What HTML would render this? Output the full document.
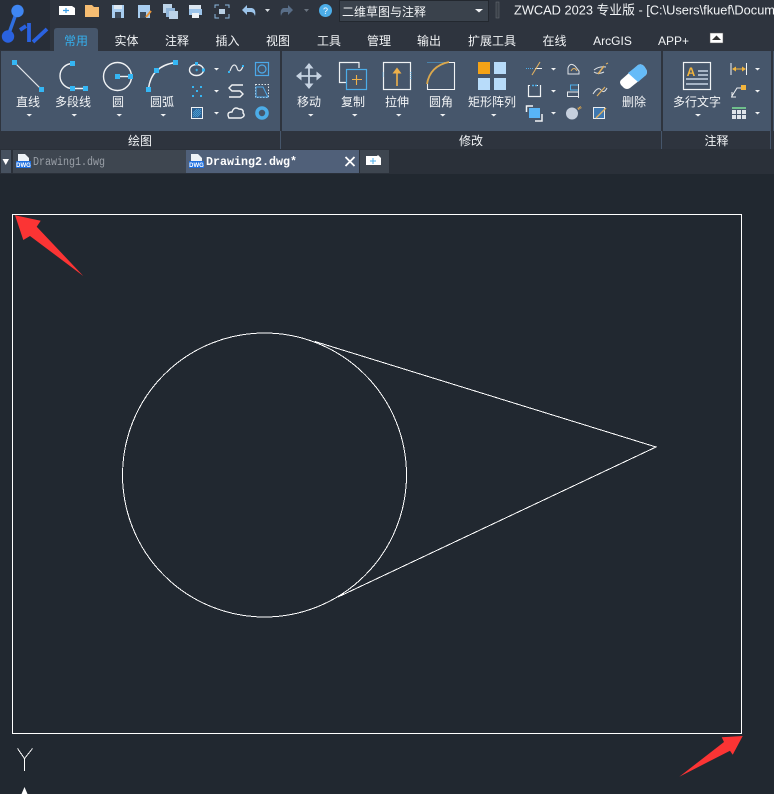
<!DOCTYPE html>
<html><head><meta charset="utf-8"><style>
html,body{margin:0;padding:0;background:#212830;width:774px;height:794px;overflow:hidden}
svg{display:block}
text{font-family:"Liberation Sans","Noto Sans CJK SC",sans-serif;font-size:12px;fill:#f2f4f6}
.c{text-anchor:middle}
.b{fill:#35b6f4}
.w{fill:none;stroke:#f0f2f4;stroke-width:1.4}
.l{fill:none;stroke:#e4e8ec;stroke-width:1.2}
.a{fill:#f0f2f4}
</style></head><body>
<svg xmlns="http://www.w3.org/2000/svg" width="774" height="794" viewBox="0 0 774 794">
<rect width="774" height="794" fill="#212830"/>
<rect width="774" height="149" fill="#2e343e"/>
<rect width="50" height="50" fill="#282e38"/>
<!-- logo -->
<path d="M17 11L8 36" stroke="#2f6fe0" stroke-width="3.400" fill="none"/>
<circle cx="17.500" cy="11" r="6.200" fill="#3f86f2"/><circle cx="8" cy="36.500" r="6.200" fill="#2a62e0"/>
<path d="M20 30L26 26M29 23V42M33 42L47 29" stroke="#2a62e0" stroke-width="3.800" fill="none"/>
<!-- quick access -->
<path d="M59 6H72L75 8V15H59Z" fill="#fff"/><path d="M63 10.500H69M66 8V13" stroke="#3a9ee8" stroke-width="1.200"/>
<path d="M85 5H92L94 7H99V17H85Z" fill="#f6bd72"/>
<rect x="112" y="5" width="12" height="13" fill="#a8cdf0"/><rect x="114" y="5" width="8" height="4" fill="#dfe9f2"/><rect x="115" y="12" width="6" height="6" fill="#3d4a5a"/>
<rect x="138" y="5" width="12" height="13" fill="#a8cdf0"/><rect x="140" y="12" width="6" height="6" fill="#3d4a5a"/><path d="M146 17L151 11" stroke="#e8953a" stroke-width="2"/>
<rect x="163" y="4" width="9" height="9" fill="#bcd3e8"/><rect x="166" y="8" width="9" height="9" fill="#8fb4d8"/><rect x="169" y="11" width="9" height="8" fill="#bcd3e8"/>
<rect x="189" y="5" width="12" height="5" fill="#dce6f0"/><rect x="189" y="9" width="13" height="6" fill="#9cc4ea"/><rect x="192" y="13" width="7" height="5" fill="#eef2f6"/>
<path d="M215 8V5H219M225 5H229V8M229 14V18H225M219 18H215V14" fill="none" stroke="#8cb8de" stroke-width="1"/><rect x="219" y="9" width="6" height="5" fill="#b8cfe4"/>
<path d="M242 10L247 5V8H251C255 8 256 12 255 16C254 13 253 12 250 12H247V15Z" fill="#9cc4ea"/>
<path d="M265 9H270L267.500 12Z" fill="#d8dde2"/>
<path d="M293 10L288 5V8H284C281 8 280 12 281 16C282 13 283 12 285 12H288V15Z" fill="#596e88"/>
<path d="M304 9H309L306.500 12Z" fill="#6a7480"/>
<circle cx="325.500" cy="10.500" r="6.500" fill="#4cade8"/><text x="325.500" y="14" class="c" style="font-size:9px;fill:#fff">?</text>
<rect x="339.500" y="0.500" width="149" height="21" fill="#3a424c" stroke="#23282f"/>
<text x="342" y="16">二维草图与注释</text>
<path d="M475 9H483L479 12.500Z" fill="#f0f2f4"/>
<rect x="496" y="2" width="3" height="16" fill="#3a4048" stroke="#6a7078" stroke-width="0.500"/>
<text x="514" y="14.500" style="font-size:12.800px">ZWCAD 2023 专业版 - [C:\Users\fkuef\Docum</text>
<!-- tabs -->
<path d="M54 51V31Q54 28 57 28H95Q98 28 98 31V51Z" fill="#46566b"/>
<text x="76" y="45" class="c" style="fill:#35b0ee">常用</text>
<text x="126.500" y="45" class="c">实体</text><text x="177" y="45" class="c">注释</text><text x="227.500" y="45" class="c">插入</text>
<text x="278" y="45" class="c">视图</text><text x="329" y="45" class="c">工具</text><text x="379" y="45" class="c">管理</text><text x="429" y="45" class="c">输出</text>
<text x="492" y="45" class="c">扩展工具</text><text x="554.500" y="45" class="c">在线</text><text x="612.500" y="45" class="c">ArcGIS</text><text x="673.500" y="45" class="c">APP+</text>
<rect x="710" y="33" width="13" height="10" fill="#fff" stroke="#555" stroke-width="0.500"/><path d="M712 40H721L716.500 35.500Z" fill="#333"/>
<!-- ribbon panels -->
<rect x="1" y="51" width="279" height="80" fill="#46566b"/>
<rect x="282" y="51" width="379" height="80" fill="#46566b"/>
<rect x="663" y="51" width="108" height="80" fill="#46566b"/>
<rect x="773" y="51" width="1" height="80" fill="#46566b"/>
<rect x="280" y="131" width="1" height="18" fill="#46566b"/><rect x="661" y="131" width="1" height="18" fill="#46566b"/><rect x="770" y="131" width="1" height="18" fill="#46566b"/>
<text x="140" y="145" class="c">绘图</text><text x="471" y="145" class="c">修改</text><text x="716.500" y="145" class="c">注释</text>
<!-- draw icons -->
<path d="M14.500 62.500L41.500 89.500" class="l"/>
<rect x="12" y="60" width="5" height="5" class="b"/><rect x="39" y="87" width="5" height="5" class="b"/>
<path d="M72.500 63.500A12.500 12.500 0 0 0 72.500 88.500H85.500" class="w"/>
<rect x="70" y="61" width="5" height="5" class="b"/><rect x="70" y="86" width="5" height="5" class="b"/><rect x="83" y="86" width="5" height="5" class="b"/>
<circle cx="117.500" cy="76.500" r="14" class="w"/><path d="M117 76.500H130" class="w"/>
<rect x="115" y="74" width="5" height="5" class="b"/><rect x="128" y="74" width="5" height="5" class="b"/>
<path d="M148.500 89Q151 66 175.500 62.500" class="w"/>
<rect x="146" y="87" width="5" height="5" class="b"/><rect x="154" y="68" width="5" height="5" class="b"/><rect x="173" y="60" width="5" height="5" class="b"/>
<text x="28" y="106" class="c">直线</text><text x="73" y="106" class="c">多段线</text><text x="118" y="106" class="c">圆</text><text x="162" y="106" class="c">圆弧</text>
<g class="a"><path d="M26.500 114H32L29.250 116.500Z"/><path d="M71.500 114H77L74.250 116.500Z"/><path d="M116.500 114H122L119.250 116.500Z"/><path d="M160.500 114H166L163.250 116.500Z"/>
<path d="M214 68H219L216.500 70.500Z"/><path d="M214 90H219L216.500 92.500Z"/><path d="M214 112H219L216.500 114.500Z"/></g>
<ellipse cx="196.500" cy="70" rx="7" ry="5.500" class="w"/>
<rect x="195" y="62" width="3" height="3" class="b"/><rect x="202" y="68.500" width="3" height="3" class="b"/><path d="M195.500 70H198M196.700 68.800V71.200" stroke="#35b6f4"/>
<g class="b"><rect x="192" y="86" width="2" height="2"/><rect x="200" y="86" width="2" height="2"/><rect x="196" y="90" width="2" height="2"/><rect x="192" y="95" width="2" height="2"/><rect x="200" y="95" width="2" height="2"/></g>
<rect x="191.500" y="107.500" width="11" height="11" fill="#2f5f8e" stroke="#f0f2f4"/><path d="M193 113L197 109M193 117L201 109M197 117L201 113M195 117L201 111M193 115L199 109" stroke="#4cade8" stroke-width="0.700"/>
<path d="M230 71C233 62 236 65 237 68C238 72 241 72 243 66" class="l"/><rect x="228" y="71" width="2" height="2" class="b"/><rect x="242" y="65" width="2" height="2" class="b"/>
<path d="M243 85H232L229 88L232 91H240L243 94L240 97H229" class="w"/>
<path d="M229 118Q226 112 232 112Q234 106 239 109Q244 109 243 113Q246 116 241 118Z" class="w"/>
<rect x="255.500" y="62.500" width="13" height="13" fill="none" stroke="#4ca8e8" stroke-width="1.200"/><circle cx="262" cy="69" r="4" fill="none" stroke="#4ca8e8" stroke-width="1.200"/>
<rect x="255.500" y="84.500" width="13" height="13" fill="none" stroke="#dfe5ea" stroke-dasharray="1.500 1.500"/><path d="M256 97V87H263L268 97Z" fill="none" stroke="#4ca8e8"/>
<circle cx="262" cy="113" r="5" fill="none" stroke="#4cade8" stroke-width="3.600"/>
<!-- modify icons -->
<path d="M309 64V88M297 76H321" stroke="#c6d3e2" stroke-width="1.800"/>
<path d="M309 63L304.500 68.500H313.500ZM309 89L304.500 83.500H313.500ZM296 76L301.500 71.500V80.500ZM322 76L316.500 71.500V80.500Z" fill="#c6d3e2"/>
<path d="M359 68V62.500H339.500V82.500H346" fill="none" stroke="#f0f2f4" stroke-width="1.200"/>
<rect x="346.500" y="69.500" width="20" height="20" fill="#46566b" stroke="#4cade8" stroke-width="1.200"/><path d="M352 79.500H362M356.500 75V85" stroke="#eeb04a" stroke-width="1.100"/>
<rect x="383.500" y="62.500" width="27" height="27" fill="none" stroke="#f0f2f4" stroke-width="1.200"/>
<path d="M397 86V72" stroke="#eeb04a" stroke-width="1.600"/><path d="M392.500 73.500L397 67.500L401.500 73.500Z" fill="#eeb04a"/>
<path d="M383 76.500V72M411 72V80" stroke="#4cade8" stroke-dasharray="1 1"/>
<path d="M427.500 80V89.500H454.500V62.500H449" fill="none" stroke="#f0f2f4" stroke-width="1.100"/>
<path d="M427.500 62.500H447" stroke="#4cade8" stroke-dasharray="1 1"/>
<path d="M427 84Q430 66 449 62" fill="none" stroke="#dba84c" stroke-width="1.800"/>
<rect x="478" y="62" width="12" height="12" fill="#f5a316"/><rect x="494" y="62" width="12" height="12" fill="#b8dcfa"/><rect x="478" y="78" width="12" height="12" fill="#b8dcfa"/><rect x="494" y="78" width="12" height="12" fill="#b8dcfa"/>
<text x="309" y="106" class="c">移动</text><text x="353" y="106" class="c">复制</text><text x="397" y="106" class="c">拉伸</text><text x="441" y="106" class="c">圆角</text><text x="492" y="106" class="c">矩形阵列</text>
<g class="a"><path d="M308 114H313.500L310.750 116.500Z"/><path d="M352 114H357.500L354.750 116.500Z"/><path d="M396 114H401.500L398.750 116.500Z"/><path d="M440 114H445.500L442.750 116.500Z"/><path d="M491 114H496.500L493.750 116.500Z"/>
<path d="M551 68H556L553.500 70.500Z"/><path d="M551 90H556L553.500 92.500Z"/><path d="M551 112H556L553.500 114.500Z"/>
<path d="M695 114H701L698 116.500Z"/><path d="M755 68H760L757.500 70.500Z"/><path d="M755 90H760L757.500 92.500Z"/><path d="M755 112H760L757.500 114.500Z"/></g>
<path d="M526 68.500H534" stroke="#4cade8" stroke-dasharray="1 1"/><path d="M535 68.500H542" stroke="#f0f2f4"/><path d="M532 75L540 62" stroke="#e0b060" stroke-width="1.100"/>
<path d="M528.500 85V96.500H540.500V85" fill="none" stroke="#f0f2f4" stroke-width="1.200"/><path d="M528 85.500H541" stroke="#f0f2f4" stroke-dasharray="2 2"/><path d="M532 85.500H538" stroke="#4cade8" stroke-dasharray="2 1" stroke-width="1.500"/>
<path d="M526.500 112V106H533M542 114V121H535" fill="none" stroke="#f0f2f4" stroke-width="1.500"/><rect x="529" y="108" width="11" height="10" fill="#58b4f6"/>
<path d="M568 74H579V71L575 66Q570 62 568 68Z" fill="none" stroke="#e0e4e8"/><path d="M571 71Q574 66 577 71" fill="none" stroke="#e0b060"/>
<rect x="570.500" y="85" width="8" height="5" fill="none" stroke="#4cade8"/><rect x="567.500" y="92" width="11" height="4.500" fill="none" stroke="#e4e8ec"/><path d="M578.500 84V98" stroke="#e4e8ec"/>
<circle cx="572" cy="113.500" r="6" fill="#c6d0de"/><path d="M578 109L581 107" stroke="#eeb04a" stroke-width="2.400" stroke-dasharray="1 0.500"/>
<path d="M594 70Q599 66 606 67M594 72Q598 75 604 72" fill="none" stroke="#e0e4e8"/><path d="M598 74L604 66" stroke="#e0b060" stroke-width="1.500"/><path d="M606 64L608 63" stroke="#e0b060"/>
<path d="M593 94Q598 86 601 90T607 88" fill="none" stroke="#e0e4e8"/><path d="M597 96L605 87" stroke="#e0b060" stroke-width="1.200"/>
<rect x="593.500" y="107.500" width="11" height="11" fill="#3f78b0" stroke="#e8ecf0"/><path d="M596 118L606 108" stroke="#e0b060" stroke-width="1.300"/>
<path d="M621 80L638 65Q641 63 644 66L646 69Q648 72 646 75L630 88Q627 90 624 88L621 85Q619 82 621 80Z" fill="#fff"/>
<path d="M628 73L638 65Q641 63 644 66L646 69Q648 72 646 75L638 82Z" fill="#65bbf8"/>
<text x="634" y="106" class="c">删除</text>
<!-- annotate -->
<rect x="683.500" y="62.500" width="27" height="27" fill="none" stroke="#f0f2f4" stroke-width="1.200"/>
<text x="691" y="76" class="c" style="fill:#f2b43c;font-size:12px;font-weight:bold">A</text>
<path d="M698 71H708M698 75H708M686 79H708M686 84H708" stroke="#b4c2d2" stroke-width="1.800"/>
<text x="697" y="106" class="c">多行文字</text>
<path d="M731 63V75M746.500 63V75" stroke="#f0f2f4"/><path d="M733 69H745" stroke="#f2b43c"/><path d="M732 69L736 66.500V71.500ZM746 69L742 66.500V71.500Z" fill="#f2b43c"/>
<path d="M732 96L737 88H743" fill="none" stroke="#f0f2f4"/><path d="M731 97H736M732 92V97" stroke="#f0f2f4"/><rect x="741" y="85" width="5" height="5" fill="#f2b43c"/>
<rect x="732" y="107" width="14" height="2" fill="#6fbf8c"/><rect x="732" y="110" width="14" height="9" fill="#dfe4ea"/><path d="M736.500 110V119M741.500 110V119M732 114.500H746" stroke="#46566b"/>
<!-- doc tabs -->
<rect y="149" width="774" height="25" fill="#2a3039"/>
<rect x="1" y="150" width="10" height="23" fill="#46515f"/><path d="M2.500 159H9L5.750 165Z" fill="#fff"/>
<rect x="13" y="150" width="173" height="23" fill="#3e4650"/>
<rect x="186" y="150" width="173" height="23" fill="#506079"/>
<rect x="360" y="150" width="29" height="23" fill="#3e4650"/>
<path d="M18 154H25L29 158V164H18Z" fill="#eef2f6"/><rect x="16" y="161" width="15" height="7" fill="#1d6fe0"/><text x="23.500" y="167" class="c" style="font-size:6px;font-weight:bold;fill:#fff">DWG</text>
<path d="M191 154H198L202 158V164H191Z" fill="#eef2f6"/><rect x="189" y="161" width="15" height="7" fill="#1d6fe0"/><text x="196.500" y="167" class="c" style="font-size:6px;font-weight:bold;fill:#fff">DWG</text>
<text x="33" y="165" textLength="72" lengthAdjust="spacingAndGlyphs" style="font-family:'Liberation Mono',monospace;font-size:11.500px;fill:#9aa0a8">Drawing1.dwg</text>
<text x="206" y="165" textLength="91" lengthAdjust="spacingAndGlyphs" style="font-family:'Liberation Mono',monospace;font-size:11.500px;font-weight:bold;fill:#fff">Drawing2.dwg*</text>
<path d="M345.500 157L354.500 166M354.500 157L345.500 166" stroke="#fff" stroke-width="1.800"/>
<path d="M366 156H377L378 155L381 158V165H366Z" fill="#fff"/><path d="M370 161H376M373 158V164" stroke="#4cade8"/>
<!-- drawing -->
<rect x="12.500" y="214.500" width="729" height="519" fill="none" stroke="#fff"/>
<g shape-rendering="crispEdges">
<circle cx="264.500" cy="475" r="142" fill="none" stroke="#fff"/>
<path d="M315 341.500L656 447L338 597" fill="none" stroke="#fff"/>
<path d="M17.500 748.500L24.500 758.500L32.500 748.500M24.500 758V771" fill="none" stroke="#fff"/>
</g>
<path d="M15 215.300L40.700 220.700L36.700 226.700L83.300 276L30 236L23.300 240Z" fill="#fb3434"/>
<path d="M742.700 736L721.700 737.300L724 742L679.300 776.700L730 750.700L732.700 754.700Z" fill="#fb3434"/>
<path d="M24.500 787L27.500 794H21.500Z" fill="#fff"/>
</svg>
</body></html>
